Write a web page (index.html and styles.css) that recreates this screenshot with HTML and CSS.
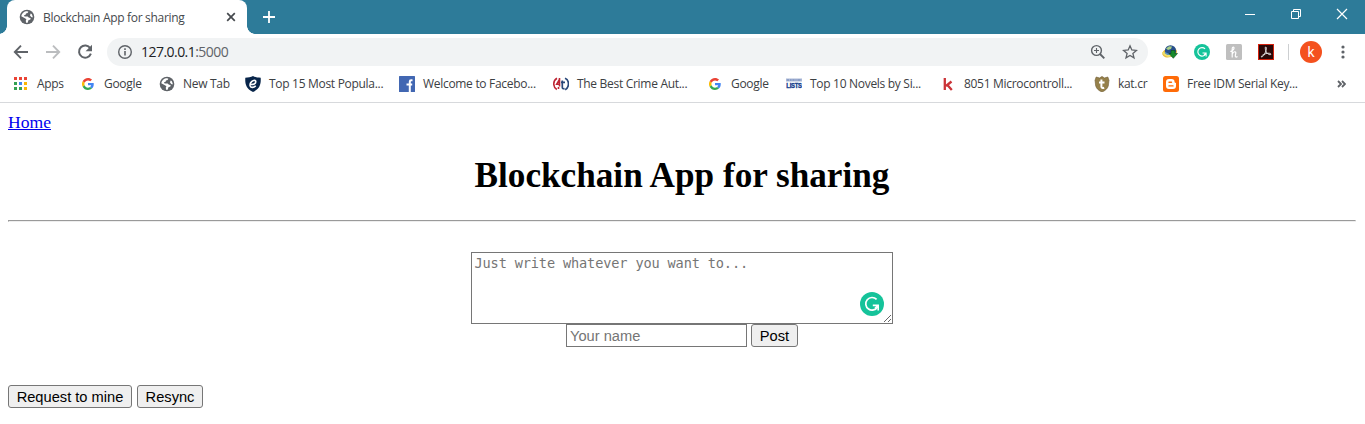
FILE: index.html
```html
<!DOCTYPE html>
<html lang="en">
<head>
<meta charset="utf-8">
<title>Blockchain App for sharing</title>
<link rel="stylesheet" href="styles.css">
</head>
<body>
<svg class="defs" aria-hidden="true">
  <symbol id="globe" viewBox="0 0 16 16"><circle cx="8" cy="8" r="7.300" fill="#5f6368"/><path d="M2.300 7.200C2.700 4.300 5 2.200 8.200 2.200L9.400 2.700 8.600 4 7 4.500 6.600 5.800 5 6.300 5.600 7.400 8.600 7.400 10 8.800 11.600 9.100 11.400 10.500 9.400 11.300 8.700 13.700 7 13.700 6.800 11.600 7.400 10.300 5.900 9.300Z" fill="#fff"/><path d="M11.600 4.600 12.700 5.100 13.700 7.400 13.500 8.600 12.200 8 11 6.400Z" fill="#fff"/></symbol>
  <symbol id="google" viewBox="0 0 48 48"><path fill="#ea4335" d="M24 9.500c3.500 0 6.700 1.200 9.200 3.600l6.900-6.900C35.900 2.400 30.500 0 24 0 14.600 0 6.500 5.400 2.600 13.200l8 6.200C12.400 13.700 17.700 9.500 24 9.500z"/><path fill="#4285f4" d="M47 24.600c0-1.600-.2-3.100-.4-4.600H24v9h12.900c-.6 3-2.300 5.500-4.800 7.200l7.700 6C44.400 38 47 32 47 24.600z"/><path fill="#fbbc05" d="M10.500 28.600a14.500 14.500 0 0 1 0-9.200l-8-6.200a24 24 0 0 0 0 21.600z"/><path fill="#34a853" d="M24 48c6.500 0 11.900-2.100 15.900-5.800l-7.800-6c-2.100 1.400-4.900 2.300-8.100 2.300-6.300 0-11.600-4.200-13.500-9.900l-8 6.200C6.500 42.600 14.600 48 24 48z"/></symbol>
  <symbol id="grammarly" viewBox="0 0 24 24"><circle cx="12" cy="12" r="12" fill="#15c39a"/><path d="M16.600 7.400A6.300 6.300 0 1 0 17.600 14.800" fill="none" stroke="#fff" stroke-width="1.700"/><path d="M12.800 13.400h5.400v5.200M18 13.600l-3 2.800" fill="none" stroke="#fff" stroke-width="1.600"/></symbol>
</svg>

<header class="browser">
  <div class="tabstrip">
    <div class="tab">
      <svg class="i16"><use href="#globe"/></svg>
      <span class="tab-title">Blockchain App for sharing</span>
      <svg class="tab-close" viewBox="0 0 10 10"><path d="M1.200 1.200 8.800 8.800M8.800 1.200 1.200 8.800" stroke="#45494d" stroke-width="1.700"/></svg>
    </div>
    <svg class="new-tab" viewBox="0 0 12 12"><path d="M6 0v12M0 6h12" stroke="#fff" stroke-width="1.800"/></svg>
    <div class="window-controls">
      <svg viewBox="0 0 12 12"><path d="M1 6.500h10" stroke="#fff"/></svg>
      <svg viewBox="0 0 12 12"><path d="M1.500 3.500h7v7h-7zM3.500 3.500v-2h7v7h-2" fill="none" stroke="#fff"/></svg>
      <svg viewBox="0 0 12 12"><path d="M1 1l10 10M11 1 1 11" stroke="#fff" stroke-width="1.200"/></svg>
    </div>
  </div>

  <div class="toolbar">
    <svg class="nav" viewBox="0 0 16 16"><path d="M15 8H2M8 1.700 1.800 8 8 14.300" fill="none" stroke="#5f6368" stroke-width="1.900"/></svg>
    <svg class="nav" viewBox="0 0 16 16"><path d="M1 8h13M8 1.700 14.200 8 8 14.300" fill="none" stroke="#bbbdbf" stroke-width="1.900"/></svg>
    <svg class="nav" viewBox="0 0 16 16"><path d="M13.300 4.300A6.100 6.100 0 1 0 13.900 9.700" fill="none" stroke="#5f6368" stroke-width="2"/><path d="M15 .8v6.400H8.600z" fill="#5f6368"/></svg>
    <div class="omnibox">
      <svg class="i16" viewBox="0 0 16 16"><circle cx="8" cy="8" r="6.300" fill="none" stroke="#5f6368" stroke-width="1.400"/><path d="M8 7v4.500M8 4.300v1.600" stroke="#5f6368" stroke-width="1.600"/></svg>
      <span class="url">127.0.0.1<span class="port">:5000</span></span>
      <svg class="i16 zoom" viewBox="0 0 16 16"><circle cx="6.500" cy="6.500" r="4.900" fill="none" stroke="#5f6368" stroke-width="1.400"/><path d="M10 10l4.300 4.300" stroke="#5f6368" stroke-width="1.900"/><path d="M4 6.500h5M6.500 4v5" stroke="#5f6368" stroke-width="1.100"/></svg>
      <svg class="i16" viewBox="0 0 16 16"><path d="M8 1.800 9.800 6 14.400 6.400 10.900 9.400 12 13.900 8 11.500 4 13.900 5.100 9.400 1.600 6.400 6.200 6Z" fill="none" stroke="#5f6368" stroke-width="1.300"/></svg>
    </div>
    <div class="extensions">
      <svg class="i16" viewBox="0 0 16 16"><ellipse cx="7.500" cy="8.500" rx="7.500" ry="4.600" fill="#e6b93d" transform="rotate(-15 8 8)"/><circle cx="8.500" cy="6.800" r="5.600" fill="#264e8c"/><path d="M4 4.500 7 2.300l3 .2-1 2.500-3 1z" fill="#a9cf88"/><path d="M.8 8c2.500 4 6 4.500 9 3" stroke="#efe06a" stroke-width="2" fill="none"/><path d="M3 8.500c1.500 1.500 3 2 5 2" stroke="#5c93c7" stroke-width="1.200" fill="none"/><path d="M9 6.500h4v3h2.500l-4.200 4.800L7 9.500h2z" fill="#16892b" stroke="#0a4a18" stroke-width=".6"/></svg>
      <svg class="i16"><use href="#grammarly"/></svg>
      <svg class="i16" viewBox="0 0 16 16"><rect width="16" height="16" rx="1.500" fill="#bfbfbf"/><path d="M6.200 13.500V4.800C6.200 2.600 8.200 2.500 8 4.200 7.800 5.900 6 7 4.300 7.500M6.300 10C7.600 7.300 10 7 9.800 9.200l-.5 2.500c-.2 1.500.8 1.800 2.200.8" stroke="#fff" stroke-width="1.200" fill="none"/></svg>
      <svg class="i16" viewBox="0 0 16 16"><rect width="16" height="16" fill="#d5210d"/><rect x="1" y="1" width="14" height="14" fill="#2a0808"/><path d="M7.700 3c1.100 0 .7 2.600-.2 5-1 2.700-2.800 5-3.800 5-1.400 0 .8-2.400 4-3.300 3-.9 5.300-.4 5.200.5-.2 1.300-3.200.2-4.600-2.100C7.300 6.300 6.900 3 7.700 3Z" fill="none" stroke="#eee" stroke-width=".9"/></svg>
    </div>
    <span class="divider"></span>
    <span class="avatar">k</span>
    <svg class="menu" viewBox="0 0 4 16"><circle cx="2" cy="3" r="1.600"/><circle cx="2" cy="8" r="1.600"/><circle cx="2" cy="13" r="1.600"/></svg>
  </div>

  <nav class="bookmarks">
    <a class="bm bm-apps"><svg class="i16" viewBox="0 0 16 16"><path d="M1 1h3v3H1zM6 1h3v3H6zM11 1h3v3h-3z" fill="#ea4335"/><path d="M1 6h3v3H1zM1 11h3v3H1zM6 11h3v3H6z" fill="#34a053"/><path d="M6 6h3v3H6z" fill="#4285f4"/><path d="M11 6h3v3h-3zM11 11h3v3h-3z" fill="#fbb605"/></svg>Apps</a>
    <a class="bm bm-short"><svg class="i16 g"><use href="#google"/></svg>Google</a>
    <a class="bm bm-newtab"><svg class="i16"><use href="#globe"/></svg>New Tab</a>
    <a class="bm"><svg class="i16" viewBox="0 0 16 16"><path d="M8 0c2 1.200 5 1.700 7.700 1.700C16 7 15.500 12.500 8 16 .5 12.500 0 7 .3 1.700 3 1.700 6 1.200 8 0Z" fill="#08254a"/><path d="M5.500 8.500c3 .3 5.300-.8 5.300-2.700 0-1.200-1.100-1.700-2.300-1.300C6 5.200 4.600 8 5.200 10c.7 2 3.700 1.800 5.500-.3" fill="none" stroke="#fff" stroke-width="1.600"/></svg>Top 15 Most Popula...</a>
    <a class="bm"><svg class="i16" viewBox="0 0 16 16"><rect width="16" height="16" rx=".5" fill="#4267b2"/><path d="M13.500 4.300h-1.400c-1 0-1.300.5-1.300 1.400V16M7.500 8.600h5.700" fill="none" stroke="#fff" stroke-width="2"/></svg>Welcome to Facebo...</a>
    <a class="bm"><svg class="i16" viewBox="0 0 16 16"><path d="M4 2.200C-.3 4.500-.3 11 3.800 13.500M6.500 2v8.500M6.500 3.500 3.700 8.300h3.500M5.500 11v2" fill="none" stroke="#bd2634" stroke-width="1.600"/><path d="M12 2.200c4.600 2 4.600 9 .2 11.500M9.300 4.500v6.800c0 1.200.8 1.700 2.300 1.300M8 6.300h4" fill="none" stroke="#294779" stroke-width="1.700"/></svg>The Best Crime Aut...</a>
    <a class="bm bm-short"><svg class="i16 g"><use href="#google"/></svg>Google</a>
    <a class="bm"><svg class="i16" viewBox="0 0 16 16"><rect y="2.500" width="16" height="3" fill="#a9b7d6"/><path d="M1 4h2M4 4h1.500M6.500 4h2M9.500 4h1M11.500 4h3" stroke="#6f86b8"/><text class="lists" x=".3" y="12" textLength="15.400" lengthAdjust="spacingAndGlyphs">LISTS</text></svg>Top 10 Novels by Si...</a>
    <a class="bm"><svg class="i16" viewBox="0 0 16 16"><path d="M4.800 2v12M11.500 5.500 6 10M7 8.500l4.800 5.500" fill="none" stroke="#cb3438" stroke-width="2.300"/></svg>8051 Microcontroll...</a>
    <a class="bm bm-kat"><svg class="i16" viewBox="0 0 16 16"><path d="M8 .5 10.500 2 13.800 1 15 4.500C14 8 16 12.500 8 16 0 12.500 2 8 1 4.500L2.200 1 5.500 2Z" fill="#95804a" stroke="#766238" stroke-width=".7"/><path d="M7.400 3.500v7c0 1.600 1 1.800 2.800 1.200M5 6.500h5.500" fill="none" stroke="#fff" stroke-width="2"/></svg>kat.cr</a>
    <a class="bm"><svg class="i16" viewBox="0 0 16 16"><rect width="16" height="16" rx="2.500" fill="#ff6b08"/><path d="M6 3h2.500c2 0 3 1 3 2.500 0 1 .4 1.300 1.500 1.500V10c0 2-1 3-3 3H6c-2 0-3-1-3-3V6c0-2 1-3 3-3Z" fill="#fff"/><path d="M6 6.200h2.500M6 9.900h4" stroke="#ff6b08" stroke-width="1.400" stroke-linecap="round"/></svg>Free IDM Serial Key...</a>
    <svg class="overflow" viewBox="0 0 9 8"><path d="M1 1l3 3-3 3M5 1l3 3-3 3" fill="none" stroke="#5f6368" stroke-width="1.800"/></svg>
  </nav>
</header>

<main class="page">
  <a class="home" href="#">Home</a>
  <h1 class="title">Blockchain App for sharing</h1>
  <hr class="rule">
  <form class="post-form">
    <div class="field">
      <textarea class="content" placeholder="Just write whatever you want to..."></textarea>
      <svg class="badge"><use href="#grammarly"/></svg>
    </div>
    <div class="row">
      <input class="name" type="text" placeholder="Your name">
      <button class="btn btn-post" type="button">Post</button>
    </div>
  </form>
  <div class="row actions">
    <button class="btn btn-mine">Request to mine</button>
    <button class="btn btn-resync">Resync</button>
  </div>
</main>
</body>
</html>
```

FILE: styles.css
```css
* { box-sizing: border-box; }
body { margin: 0; background: #fff; overflow: hidden; font-family: "Liberation Serif", serif; }
svg { display: block; flex: none; }
.defs { display: none; }
.i16 { width: 16px; height: 16px; }

.browser { font-family: "Open Sans", "Noto Sans", sans-serif; }
.tabstrip { height: 34px; background: #2d7b99; display: flex; align-items: center; }
.tab {
  position: relative; width: 240px; height: 34px; margin-left: 7px; padding: 0 11px 0 12px;
  display: flex; align-items: center; background: #fff; border-radius: 8px 8px 0 0;
}
.tab::before, .tab::after { content: ""; position: absolute; bottom: 0; width: 8px; height: 8px; }
.tab::before { left: -8px; background: radial-gradient(circle at 0 0, transparent 7.5px, #fff 8px); }
.tab::after { right: -8px; background: radial-gradient(circle at 100% 0, transparent 7.5px, #fff 8px); }
.tab-title { margin-left: 8px; font-size: 12px; letter-spacing: -.31px; color: #45494d; white-space: nowrap; }
.tab-close { width: 10px; height: 10px; margin-left: auto; }
.new-tab { width: 12px; height: 12px; margin-left: 16px; }
.window-controls { display: flex; gap: 34px; margin: 0 17px 6px auto; }
.window-controls svg { width: 12px; height: 12px; }

.toolbar { height: 36px; display: flex; align-items: center; padding-left: 13px; }
.nav { width: 16px; height: 16px; margin-right: 16px; }
.omnibox {
  width: 1041px; height: 28px; margin-left: -2px; padding: 0 10px; border-radius: 14px;
  background: #f1f3f4; display: flex; align-items: center;
}
.url { margin: 0 auto 1px 8px; font-size: 14px; letter-spacing: -.54px; color: #202124; }
.port { color: #5f6368; }
.zoom { margin-right: 16px; }
.extensions { display: flex; gap: 16px; margin-left: 14px; }
.divider { width: 1px; height: 16px; background: #cdcfd1; margin: 0 11px 0 14px; }
.avatar {
  width: 22px; height: 22px; border-radius: 50%; background: #f4511e; color: #fff;
  display: grid; place-items: center; font: 14px/20px Roboto, sans-serif;
}
.menu { width: 4px; height: 16px; margin-left: 19px; fill: #5f6368; }

.bookmarks { height: 33px; padding: 0 19px 5px 13px; display: flex; align-items: center; border-bottom: 1px solid #d7d9dc; }
.bm {
  flex: none; width: 154px; display: flex; align-items: center; gap: 8px; white-space: nowrap;
  font-size: 12px; letter-spacing: -.3px; color: #3c4043;
}
.g { padding: 2px; }
.bm-apps { width: 67px; }
.bm-short { width: 79px; }
.bm-newtab { width: 86px; }
.bm-kat { width: 69px; }
.lists { font: bold 7px "Liberation Sans", sans-serif; fill: #17408e; stroke: #17408e; stroke-width: .4px; }
.overflow { width: 9px; height: 8px; margin-left: auto; }

.page { padding: 9px 9px 0 8px; }
.home { display: block; font-size: 17.6px; line-height: 20px; color: #0000ee; width: max-content; }
.title { margin: 24px 0 0; font-size: 35.2px; line-height: 40px; text-align: center; }
.rule { margin: 24px 0 0; border: 1px inset #eee; }
.post-form { margin-top: 30px; }
.field { position: relative; width: 422px; height: 72px; margin: 0 auto; left: -.5px; }
.content {
  display: block; width: 422px; height: 72px; margin: 0; padding: 2px 3px; resize: both;
  border: 1px solid #767676; font: 13.6px/17px "DejaVu Sans Mono", monospace; letter-spacing: -.14px;
}
.badge { position: absolute; right: 9px; bottom: 8px; width: 24px; height: 24px; }
.row { display: flex; justify-content: center; gap: 4px; }
.name { width: 181px; height: 23px; padding: 1px 3px; border: 1px solid #767676; font: 14.67px "Liberation Sans", sans-serif; }
.content::placeholder, .name::placeholder { color: #757575; }
.btn {
  height: 23px; padding: 0; border: 1px solid #767676; border-radius: 3px;
  background: #efefef; color: #000; font: 14.67px "Liberation Sans", sans-serif;
}
.btn-post { width: 47px; }
.actions { justify-content: flex-start; gap: 5px; margin-top: 38px; }
.btn-mine { width: 124px; }
.btn-resync { width: 66px; }
```
